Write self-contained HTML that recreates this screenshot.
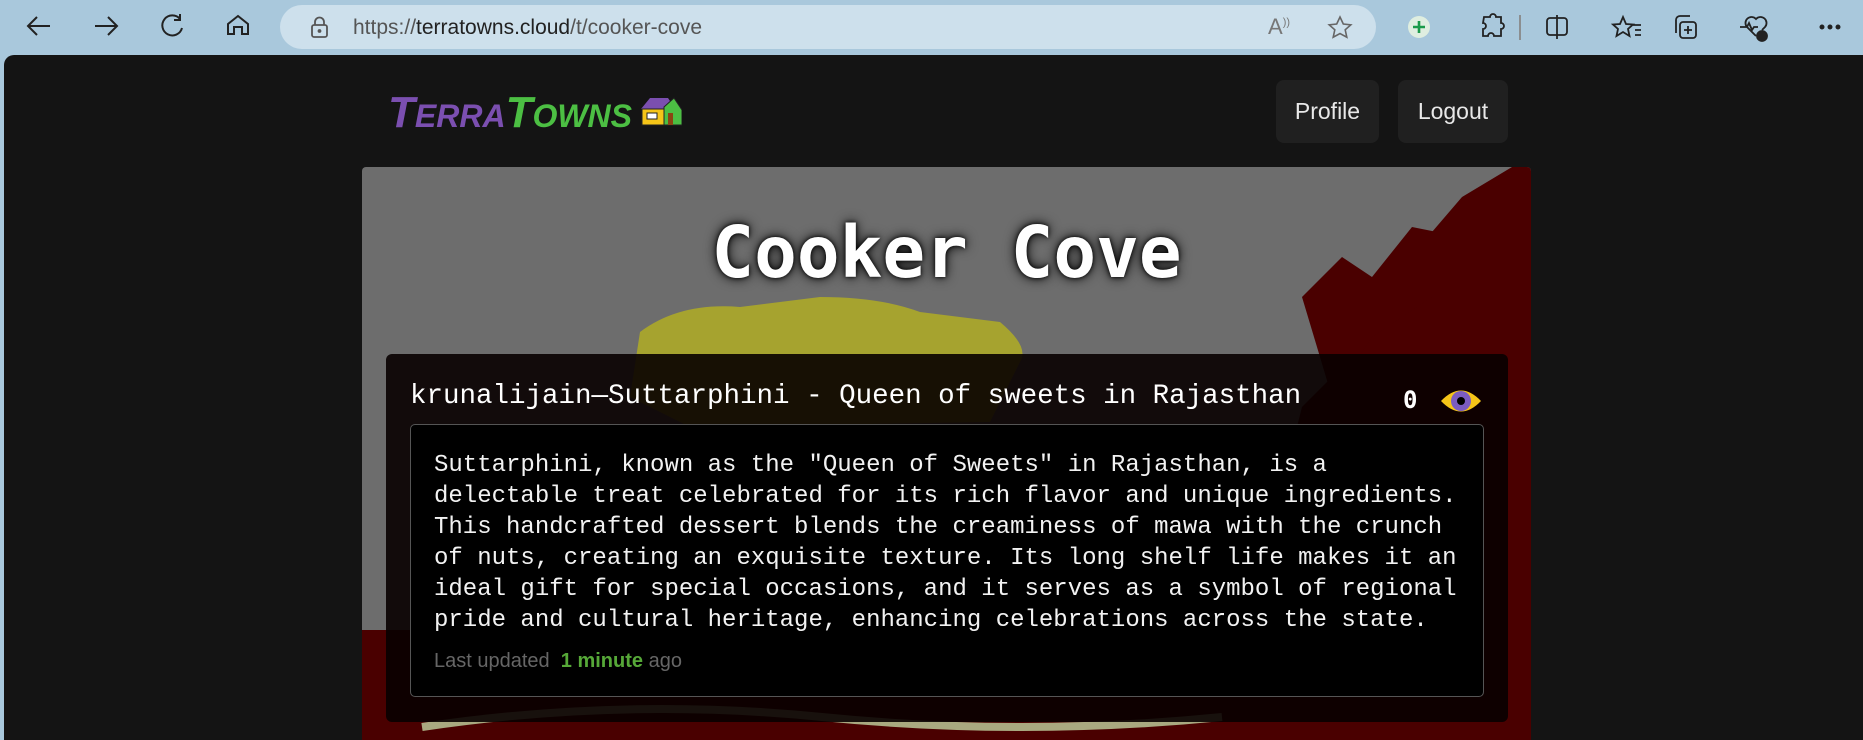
<!DOCTYPE html>
<html><head><meta charset="utf-8"><style>
*{margin:0;padding:0;box-sizing:border-box}
body{width:1863px;height:740px;overflow:hidden;background:#a9c8dc;font-family:"Liberation Sans",sans-serif;position:relative}
.bar{position:absolute;left:0;top:0;width:1863px;height:55px;background:#a9c8dc}
.url{position:absolute;left:280px;top:5px;width:1096px;height:44px;border-radius:22px;background:#cde0ec}
.url span{position:absolute;left:73px;top:11px;font-size:21px;color:#555}
.url b{font-weight:normal;color:#222}
.page{position:absolute;left:4px;top:55px;width:1859px;height:685px;background:#141414;border-radius:10px 0 0 0}
.btn{position:absolute;top:80px;height:63px;background:#202020;border-radius:8px;color:#e8e8e8;font-size:23px;line-height:63px;text-align:center}
.hero{position:absolute;left:362px;top:167px;width:1169px;height:573px;background:#6d6d6d;overflow:hidden;border-radius:4px 4px 0 0}
.title{position:absolute;left:0;width:100%;top:44px;text-align:center;font-family:"DejaVu Sans Mono","Liberation Mono",monospace;font-weight:bold;font-size:71px;color:#fff;text-shadow:0 0 12px #000,0 0 4px #000}
.card{position:absolute;left:386px;top:354px;width:1122px;height:368px;background:rgba(8,0,0,0.9);border-radius:6px}
.h{position:absolute;left:410px;top:381px;font-family:"Liberation Mono",monospace;font-size:27.5px;color:#fff;white-space:nowrap}
.box{position:absolute;left:410px;top:424px;width:1074px;height:273px;background:#000;border:1px solid #555;border-radius:5px}
.p{position:absolute;left:434px;top:450px;font-family:"Liberation Mono",monospace;font-size:24px;line-height:31px;color:#f2f2f2;white-space:pre}
.lu{position:absolute;left:434px;top:650px;font-size:20px;color:#666}
.lu b{color:#56a838}
</style></head><body>
<div class="bar"></div>
<svg style="position:absolute;left:0;top:0" width="280" height="55" fill="none" stroke="#222" stroke-width="2">
<path d="M50 26H28M37 17l-9 9 9 9"/><path d="M95 26h22M108 17l9 9-9 9"/>
<path d="M180 19a10 10 0 1 0 2 9M180 14v6h-6"/>
<path d="M228 34V24l10-8 10 8v10h-6v-7h-8v7z"/>
</svg>
<div class="url"><svg style="position:absolute;left:30px;top:11px" width="20" height="22" fill="none" stroke="#555" stroke-width="1.8"><rect x="2" y="9" width="15" height="12" rx="2"/><path d="M5 9V6a4.5 4.5 0 0 1 9 0v3"/><circle cx="9.5" cy="15" r="1" fill="#555"/></svg>
<span>https://<b>terratowns.cloud</b>/t/cooker-cove</span>
<span style="left:988px;top:9px;font-size:22px;color:#777">A<sup style="font-size:11px">))</sup></span>
<svg style="position:absolute;left:1047px;top:10px" width="26" height="26" fill="none" stroke="#666" stroke-width="1.6"><path d="M13 2l3.3 7 7.5.8-5.6 5 1.6 7.4L13 18.5 6.2 22.2l1.6-7.4-5.6-5 7.5-.8z"/></svg></div>
<svg style="position:absolute;left:1390px;top:0" width="473" height="55" fill="none" stroke="#222" stroke-width="1.8">
<circle cx="29" cy="27" r="11" fill="#dfeee0" stroke="none"/><path d="M29 21v12M23 27h12" stroke="#1a9a4a" stroke-width="2.6"/>
<path d="M94 17h6a3 3 0 0 1 6 0h5v6a3 3 0 0 1 0 6v7h-7a3 3 0 0 0-6 0h-5v-7a3 3 0 0 0 0-6z"/>
<path d="M130 15v25" stroke="#888"/>
<rect x="157" y="18" width="20" height="17" rx="3"/><path d="M167 15v24"/>
<path d="M233 17l3 7 7 .5-5 4.5 1.5 7-6.5-4-6.5 4 1.5-7-5-4.5 7-.5zM243 25h8M245 30h6M245 35h6"/>
<rect x="290" y="22" width="16" height="16" rx="3"/><path d="M286 33V20a4 4 0 0 1 4-4h10M298 26v8M294 30h8"/>
<path d="M366 36l-9-9a6 6 0 0 1 9-8 6 6 0 0 1 9 8l-3 3M350 27h7l2-4 3 7 2-3h4"/><circle cx="372" cy="36" r="5" fill="#222"/>
<circle cx="432" cy="27" r="1.6" fill="#222"/><circle cx="440" cy="27" r="1.6" fill="#222"/><circle cx="448" cy="27" r="1.6" fill="#222"/>
</svg>
<div class="page"></div>
<div style="position:absolute;left:388px;top:88px;font-family:'Liberation Sans',sans-serif;font-weight:bold;font-style:italic;white-space:nowrap">
<span style="color:#7b4fb0;font-size:44px">T</span><span style="color:#7b4fb0;font-size:32px">ERRA</span><span style="color:#4cbf43;font-size:44px">T</span><span style="color:#4cbf43;font-size:32px">OWNS</span></div>
<svg style="position:absolute;left:638px;top:95px" width="44" height="34"><path d="M3 14L12 3h18l8 12z" fill="#7b4fb0"/><path d="M4 14h22v16H4z" fill="#f5c518" stroke="#222"/><path d="M26 30V12l10-9 8 12v15z" fill="#4cbf43" stroke="#222"/><rect x="9" y="18" width="10" height="6" fill="#fff" stroke="#222"/><rect x="30" y="18" width="5" height="12" fill="#8b4513"/></svg>
<div class="btn" style="left:1276px;width:103px">Profile</div>
<div class="btn" style="left:1398px;width:110px">Logout</div>
<div class="hero">
<svg width="1169" height="573" style="position:absolute;left:0;top:0">
<path d="M278 165q40-30 100-25l80-10q60 0 100 15l80 10q30 25 20 40l-30 60-300 5-60-30z" fill="#a6a32f"/>
<path d="M880 573V380l40-60 20-80 60-60 40-80 60-70 50-30h19v523z" fill="#4a0000"/>
<path d="M940 130l40-40 30 20 40-50 50 10-30 60-60 40-40 60z" fill="#4a0000"/>
<rect x="0" y="463" width="1169" height="110" fill="#4a0000"/>
<path d="M60 560q200-30 400-10t400 0" stroke="#a9a980" stroke-width="8" fill="none"/>
</svg>
<div class="title">Cooker Cove</div>
</div>
<div class="card"></div>
<div class="h">krunalijain—Suttarphini - Queen of sweets in Rajasthan</div>
<div style="position:absolute;left:1403px;top:386px;font-family:'DejaVu Sans Mono',monospace;font-weight:bold;font-size:24px;color:#fff">0</div>
<svg style="position:absolute;left:1440px;top:386px" width="42" height="30"><path d="M1 15Q21-6 41 15Q21 36 1 15z" fill="#f5c518"/><circle cx="21" cy="15" r="10" fill="#7b5cc0"/><circle cx="21" cy="15" r="4" fill="#000"/></svg>
<div class="box"></div>
<div class="p">Suttarphini, known as the "Queen of Sweets" in Rajasthan, is a
delectable treat celebrated for its rich flavor and unique ingredients.
This handcrafted dessert blends the creaminess of mawa with the crunch
of nuts, creating an exquisite texture. Its long shelf life makes it an
ideal gift for special occasions, and it serves as a symbol of regional
pride and cultural heritage, enhancing celebrations across the state.</div>
<div class="lu">Last updated &nbsp;<b>1 minute</b> ago</div>
</body></html>
